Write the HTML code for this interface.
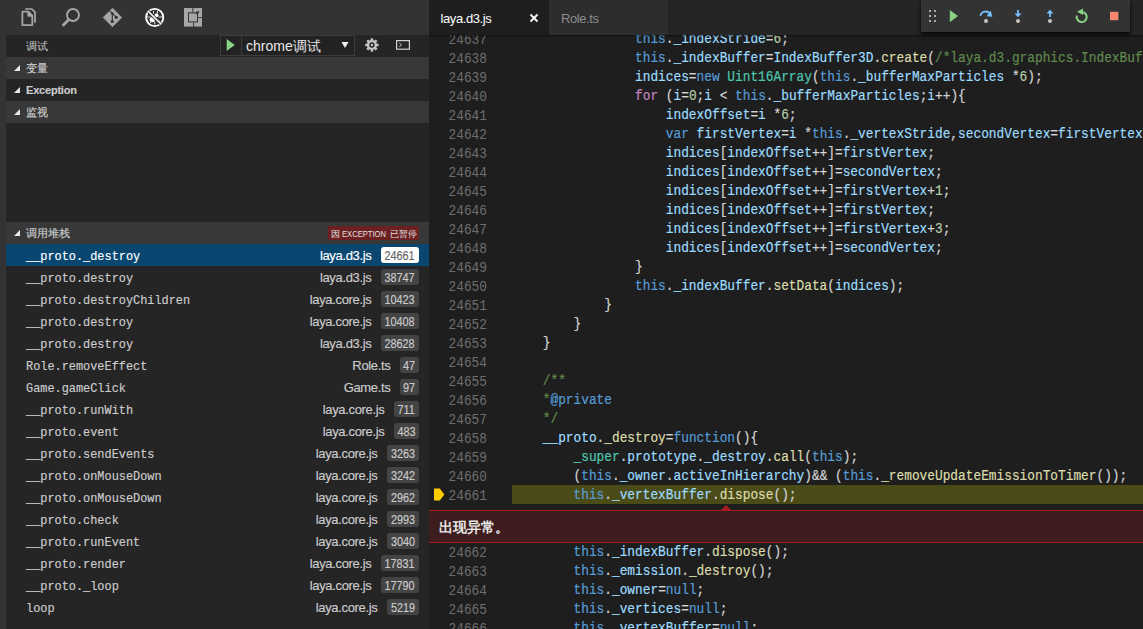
<!DOCTYPE html>
<html><head><meta charset="utf-8">
<style>
*{margin:0;padding:0;box-sizing:border-box}
html,body{width:1143px;height:629px;overflow:hidden;background:#1e1e1e;font-family:"Liberation Sans",sans-serif}
.abs{position:absolute}
#side{position:absolute;left:0;top:0;width:429px;height:629px;background:#252526;overflow:hidden}
#strip{position:absolute;left:0;top:0;width:6px;height:629px;background:#333333}
#topbar{position:absolute;left:0;top:0;width:429px;height:35px;background:#333333}
.hdr{position:absolute;left:6px;width:423px;height:22px;background:#383838;color:#cccccc;font-size:11px;line-height:22px}
.hdr .t{position:absolute;left:20px;top:0;-webkit-text-stroke:0.15px}
.tri{position:absolute;left:8px;top:7.5px;width:0;height:0;border-left:6px solid transparent;border-bottom:6px solid #e8e8e8}
.badge{position:absolute;white-space:nowrap;overflow:hidden;left:322px;top:4px;width:91px;height:14px;line-height:14px;background:#6c2022;border-radius:2px;font-size:9px;color:#e0e0e0}
.badge span{position:absolute;top:0}
.row{position:absolute;left:6px;width:423px;height:22px;line-height:22px;color:#cccccc;-webkit-text-stroke:0.15px}
.row .fn{position:absolute;left:20px;top:1.5px;font-family:"Liberation Mono",monospace;font-size:11.9px}
.row .file{position:absolute;top:1px;font-size:13px;letter-spacing:-0.33px}
.row .num{position:absolute;top:3px;height:16px;line-height:18px;background:#444444;border-radius:3px;font-size:11.5px;text-align:center;color:#cccccc}
.sel{background:#094771;color:#ffffff}
.row .num span{display:inline-block;font-size:12.6px;transform:scaleX(0.86)}
.sel .num{background:#ffffff;color:#666666}
#editor{position:absolute;left:429px;top:0;width:714px;height:629px;background:#1e1e1e;overflow:hidden}
#tabs{position:absolute;left:0;top:0;width:714px;height:35px;background:#252526}
.tab{position:absolute;top:0;height:35px;line-height:35px;font-size:13px}
.ln{position:absolute;left:0;width:58px;padding-top:1.5px;text-align:right;color:#6e6e6e;font-family:"Liberation Mono",monospace;font-size:14px;transform-origin:100% 0;transform:scaleX(0.9153);height:19px;line-height:19px}
.cl{position:absolute;left:83px;padding-top:1px;-webkit-text-stroke:0.2px;transform-origin:0 0;transform:scaleX(0.9153);white-space:pre;font-family:"Liberation Mono",monospace;font-size:14px;height:19px;line-height:19px;color:#d4d4d4}
.k{color:#569cd6}.v{color:#9cdcfe}.f{color:#dcdcaa}.n{color:#b5cea8}.c{color:#608b4e}.ty{color:#4ec9b0}.p{color:#c586c0}

</style></head><body>
<div id="side"><div id="topbar">
<svg class="abs" style="left:0;top:0" width="429" height="35" viewBox="0 0 429 35">
 <!-- files -->
 <path d="M25.2 9 H31.8 L35 12.2 V22.7" fill="none" stroke="#a6a6a6" stroke-width="1.7"/>
 <path d="M22.4 11.7 H28.4 L32.3 15.6 V25.1 H22.4 Z" fill="none" stroke="#a6a6a6" stroke-width="1.8" stroke-linejoin="round"/>
 <path d="M27.6 11 V16.4 H33" fill="#a6a6a6"/>
 <path d="M27.6 11 L33 16.4 H27.6Z" fill="#a6a6a6"/>
 <!-- search -->
 <circle cx="73" cy="15" r="6" fill="none" stroke="#a6a6a6" stroke-width="1.9"/>
 <path d="M68.9 19.4 L62.6 25.7" stroke="#a6a6a6" stroke-width="2.8"/>
 <!-- git -->
 <path d="M112.5 8.2 L121.7 17.5 L112.5 26.7 L103.2 17.5Z" fill="#a6a6a6" stroke="#a6a6a6" stroke-width="0.8" stroke-linejoin="round"/>
 <path d="M109.3 10.6 L112.3 13.3 L112.3 21.5 M112.3 13.3 L116.3 17.3" stroke="#333" stroke-width="1.1" fill="none"/>
 <circle cx="112.3" cy="13.5" r="1.3" fill="#333"/>
 <circle cx="112.3" cy="21.5" r="1.6" fill="#333"/>
 <circle cx="116.3" cy="17.3" r="1.6" fill="#333"/>
 <!-- debug -->
 <circle cx="154.7" cy="17.5" r="8.6" fill="none" stroke="#ffffff" stroke-width="1.9"/>
 <circle cx="152.3" cy="19.6" r="2.7" fill="#ffffff"/>
 <circle cx="156.5" cy="15.3" r="2" fill="#ffffff"/>
 <path d="M147.2 17 H150.5 M158.5 17 H162 M153.5 11 V13.5 M157.5 10.8 V13 M154.8 21.5 V24.5 M150 23 L151.5 21.5 M159 20 L160.5 21.5" stroke="#e8e8e8" stroke-width="1"/>
 <path d="M148.4 11.5 L160.8 23.8" stroke="#333" stroke-width="3.2"/>
 <path d="M148.2 11.2 L161 24" stroke="#ffffff" stroke-width="1.6"/>
 <!-- extensions -->
 <rect x="184" y="8" width="18" height="18.6" fill="#a6a6a6"/>
 <rect x="188" y="12.3" width="10" height="10.1" fill="#333"/>
 <rect x="189" y="13.4" width="8" height="8" fill="#a6a6a6"/>
 <rect x="192.4" y="7" width="0.9" height="5.5" fill="#333"/>
 <rect x="193.2" y="22.3" width="0.9" height="5" fill="#333"/>
 <rect x="198" y="17.2" width="5" height="0.9" fill="#333"/>
 <path d="M196 12.3 L198 10.8 L199.2 12 L197.8 14.2 H196Z" fill="#333"/>
</svg>
</div>
<div id="strip"></div>
<div class="abs" style="left:6px;top:35px;width:423px;height:22px;background:#252526"></div>
<div class="abs cjk" style="left:26px;top:35px;height:22px;line-height:22px;font-size:11px;color:#cccccc">调试</div>
<div class="abs" style="left:220px;top:35px;width:135px;height:21px;border:1px solid #3c3c3c;background:#222222"></div>
<div class="abs" style="left:241px;top:35px;width:1px;height:21px;background:#3c3c3c"></div>
<svg class="abs" style="left:226px;top:39px" width="10" height="13"><path d="M0.7 0 L8.8 6 L0.7 12Z" fill="#89d185"/></svg>
<div class="abs" style="left:246px;top:36px;height:21px;line-height:21px;font-size:14px;color:#e8e8e8">chrome调试</div>
<svg class="abs" style="left:341px;top:41px" width="8" height="8"><path d="M0.5 1 L7.5 1 L4 7Z" fill="#f0f0f0"/></svg>
<svg class="abs" style="left:363px;top:36px" width="18" height="18" viewBox="0 0 18 18">
 <g transform="translate(8.9 9) scale(0.9)" fill="#c5c5c5">
  <circle r="5.6"/>
  <g id="teeth"><rect x="-1.4" y="-7.4" width="2.8" height="3"/><rect x="-1.4" y="4.4" width="2.8" height="3"/><rect x="-7.4" y="-1.4" width="3" height="2.8"/><rect x="4.4" y="-1.4" width="3" height="2.8"/></g>
  <g transform="rotate(45)"><rect x="-1.4" y="-7.4" width="2.8" height="3"/><rect x="-1.4" y="4.4" width="2.8" height="3"/><rect x="-7.4" y="-1.4" width="3" height="2.8"/><rect x="4.4" y="-1.4" width="3" height="2.8"/></g>
  <circle r="3" fill="#252526"/>
  <circle r="1.4" fill="#c5c5c5"/>
 </g>
</svg>
<svg class="abs" style="left:395px;top:39px" width="17" height="13"><rect x="1.6" y="1.6" width="12.8" height="8.6" fill="none" stroke="#d0d0d0" stroke-width="1.2"/><path d="M4.3 3.6 L6.3 5.8 L4.3 8" fill="none" stroke="#c5c5c5" stroke-width="1"/></svg>

<div class="hdr" style="top:57px;background:#383838"><div class="tri"></div><div class="t" style="">变量</div></div>
<div class="hdr" style="top:79px;background:#252526"><div class="tri"></div><div class="t" style="font-weight:bold;letter-spacing:-0.2px;">Exception</div></div>
<div class="hdr" style="top:101px;background:#383838"><div class="tri"></div><div class="t" style="">监视</div></div>
<div class="hdr" style="top:222px;background:#383838"><div class="tri"></div><div class="t" style="">调用堆栈</div><div class="badge"><span style="left:3px;top:1px;font-size:9px">因</span><span style="left:14px;top:0.5px;font-size:9.5px;transform-origin:0 50%;transform:scaleX(0.8)">EXCEPTION</span><span style="left:62px;top:0.5px">已暂停</span></div></div>
<div class="row sel" style="top:244px"><div class="fn">__proto._destroy</div><div class="file" style="right:57.5px">laya.d3.js</div><div class="num" style="left:375px;width:38px"><span>24661</span></div></div>
<div class="row" style="top:266px"><div class="fn">__proto.destroy</div><div class="file" style="right:57.5px">laya.d3.js</div><div class="num" style="left:375px;width:38px"><span>38747</span></div></div>
<div class="row" style="top:288px"><div class="fn">__proto.destroyChildren</div><div class="file" style="right:57.5px">laya.core.js</div><div class="num" style="left:375px;width:38px"><span>10423</span></div></div>
<div class="row" style="top:310px"><div class="fn">__proto.destroy</div><div class="file" style="right:57.5px">laya.core.js</div><div class="num" style="left:375px;width:38px"><span>10408</span></div></div>
<div class="row" style="top:332px"><div class="fn">__proto.destroy</div><div class="file" style="right:57.5px">laya.d3.js</div><div class="num" style="left:375px;width:38px"><span>28628</span></div></div>
<div class="row" style="top:354px"><div class="fn">Role.removeEffect</div><div class="file" style="right:38.5px">Role.ts</div><div class="num" style="left:394px;width:19px"><span>47</span></div></div>
<div class="row" style="top:376px"><div class="fn">Game.gameClick</div><div class="file" style="right:38.5px">Game.ts</div><div class="num" style="left:394px;width:19px"><span>97</span></div></div>
<div class="row" style="top:398px"><div class="fn">__proto.runWith</div><div class="file" style="right:44.5px">laya.core.js</div><div class="num" style="left:388px;width:25px"><span>711</span></div></div>
<div class="row" style="top:420px"><div class="fn">__proto.event</div><div class="file" style="right:44.5px">laya.core.js</div><div class="num" style="left:388px;width:25px"><span>483</span></div></div>
<div class="row" style="top:442px"><div class="fn">__proto.sendEvents</div><div class="file" style="right:51.5px">laya.core.js</div><div class="num" style="left:381px;width:32px"><span>3263</span></div></div>
<div class="row" style="top:464px"><div class="fn">__proto.onMouseDown</div><div class="file" style="right:51.5px">laya.core.js</div><div class="num" style="left:381px;width:32px"><span>3242</span></div></div>
<div class="row" style="top:486px"><div class="fn">__proto.onMouseDown</div><div class="file" style="right:51.5px">laya.core.js</div><div class="num" style="left:381px;width:32px"><span>2962</span></div></div>
<div class="row" style="top:508px"><div class="fn">__proto.check</div><div class="file" style="right:51.5px">laya.core.js</div><div class="num" style="left:381px;width:32px"><span>2993</span></div></div>
<div class="row" style="top:530px"><div class="fn">__proto.runEvent</div><div class="file" style="right:51.5px">laya.core.js</div><div class="num" style="left:381px;width:32px"><span>3040</span></div></div>
<div class="row" style="top:552px"><div class="fn">__proto.render</div><div class="file" style="right:57.5px">laya.core.js</div><div class="num" style="left:375px;width:38px"><span>17831</span></div></div>
<div class="row" style="top:574px"><div class="fn">__proto._loop</div><div class="file" style="right:57.5px">laya.core.js</div><div class="num" style="left:375px;width:38px"><span>17790</span></div></div>
<div class="row" style="top:596px"><div class="fn">loop</div><div class="file" style="right:51.5px">laya.core.js</div><div class="num" style="left:381px;width:32px"><span>5219</span></div></div></div>
<div id="editor"><div id="code" class="abs" style="left:0;top:0;width:714px;height:629px"><div class="abs" style="left:83px;top:485px;width:700px;height:19px;background:#4b4b18"></div>
<div class="ln" style="top:29px">24637</div><div class="cl" style="top:29px">                <span class="k">this</span>.<span class="v">_indexStride</span>=<span class="n">6</span>;</div>
<div class="ln" style="top:48px">24638</div><div class="cl" style="top:48px">                <span class="k">this</span>.<span class="v">_indexBuffer</span>=<span class="v">IndexBuffer3D</span>.<span class="f">create</span>(<span class="c">/*laya.d3.graphics.IndexBuffer3D*/</span></div>
<div class="ln" style="top:67px">24639</div><div class="cl" style="top:67px">                <span class="v">indices</span>=<span class="k">new</span> <span class="ty">Uint16Array</span>(<span class="k">this</span>.<span class="v">_bufferMaxParticles</span> *<span class="n">6</span>);</div>
<div class="ln" style="top:86px">24640</div><div class="cl" style="top:86px">                <span class="p">for</span> (<span class="v">i</span>=<span class="n">0</span>;<span class="v">i</span> &lt; <span class="k">this</span>.<span class="v">_bufferMaxParticles</span>;<span class="v">i</span>++){</div>
<div class="ln" style="top:105px">24641</div><div class="cl" style="top:105px">                    <span class="v">indexOffset</span>=<span class="v">i</span> *<span class="n">6</span>;</div>
<div class="ln" style="top:124px">24642</div><div class="cl" style="top:124px">                    <span class="k">var</span> <span class="v">firstVertex</span>=<span class="v">i</span> *<span class="k">this</span>.<span class="v">_vertexStride</span>,<span class="v">secondVertex</span>=<span class="v">firstVertex</span>+<span class="n">1</span>;</div>
<div class="ln" style="top:143px">24643</div><div class="cl" style="top:143px">                    <span class="v">indices</span>[<span class="v">indexOffset</span>++]=<span class="v">firstVertex</span>;</div>
<div class="ln" style="top:162px">24644</div><div class="cl" style="top:162px">                    <span class="v">indices</span>[<span class="v">indexOffset</span>++]=<span class="v">secondVertex</span>;</div>
<div class="ln" style="top:181px">24645</div><div class="cl" style="top:181px">                    <span class="v">indices</span>[<span class="v">indexOffset</span>++]=<span class="v">firstVertex</span>+<span class="n">1</span>;</div>
<div class="ln" style="top:200px">24646</div><div class="cl" style="top:200px">                    <span class="v">indices</span>[<span class="v">indexOffset</span>++]=<span class="v">firstVertex</span>;</div>
<div class="ln" style="top:219px">24647</div><div class="cl" style="top:219px">                    <span class="v">indices</span>[<span class="v">indexOffset</span>++]=<span class="v">firstVertex</span>+<span class="n">3</span>;</div>
<div class="ln" style="top:238px">24648</div><div class="cl" style="top:238px">                    <span class="v">indices</span>[<span class="v">indexOffset</span>++]=<span class="v">secondVertex</span>;</div>
<div class="ln" style="top:257px">24649</div><div class="cl" style="top:257px">                }</div>
<div class="ln" style="top:276px">24650</div><div class="cl" style="top:276px">                <span class="k">this</span>.<span class="v">_indexBuffer</span>.<span class="f">setData</span>(<span class="v">indices</span>);</div>
<div class="ln" style="top:295px">24651</div><div class="cl" style="top:295px">            }</div>
<div class="ln" style="top:314px">24652</div><div class="cl" style="top:314px">        }</div>
<div class="ln" style="top:333px">24653</div><div class="cl" style="top:333px">    }</div>
<div class="ln" style="top:352px">24654</div><div class="cl" style="top:352px"></div>
<div class="ln" style="top:371px">24655</div><div class="cl" style="top:371px">    <span class="c">/**</span></div>
<div class="ln" style="top:390px">24656</div><div class="cl" style="top:390px">    <span class="c">*</span><span class="k">@private</span></div>
<div class="ln" style="top:409px">24657</div><div class="cl" style="top:409px">    <span class="c">*/</span></div>
<div class="ln" style="top:428px">24658</div><div class="cl" style="top:428px">    <span class="v">__proto</span>.<span class="f">_destroy</span>=<span class="k">function</span>(){</div>
<div class="ln" style="top:447px">24659</div><div class="cl" style="top:447px">        <span class="ty">_super</span>.<span class="v">prototype</span>.<span class="v">_destroy</span>.<span class="f">call</span>(<span class="k">this</span>);</div>
<div class="ln" style="top:466px">24660</div><div class="cl" style="top:466px">        (<span class="k">this</span>.<span class="v">_owner</span>.<span class="v">activeInHierarchy</span>)&amp;&amp; (<span class="k">this</span>.<span class="f">_removeUpdateEmissionToTimer</span>());</div>
<div class="ln" style="top:485px">24661</div><div class="cl" style="top:485px">        <span class="k">this</span>.<span class="v">_vertexBuffer</span>.<span class="f">dispose</span>();</div>
<div class="ln" style="top:542px">24662</div><div class="cl" style="top:542px">        <span class="k">this</span>.<span class="v">_indexBuffer</span>.<span class="f">dispose</span>();</div>
<div class="ln" style="top:561px">24663</div><div class="cl" style="top:561px">        <span class="k">this</span>.<span class="v">_emission</span>.<span class="f">_destroy</span>();</div>
<div class="ln" style="top:580px">24664</div><div class="cl" style="top:580px">        <span class="k">this</span>.<span class="v">_owner</span>=<span class="k">null</span>;</div>
<div class="ln" style="top:599px">24665</div><div class="cl" style="top:599px">        <span class="k">this</span>.<span class="v">_vertices</span>=<span class="k">null</span>;</div>
<div class="ln" style="top:618px">24666</div><div class="cl" style="top:618px">        <span class="k">this</span>.<span class="v">_vertexBuffer</span>=<span class="k">null</span>;</div>
<svg class="abs" style="left:5px;top:488px" width="12" height="13"><path d="M0 0.5 H5.8 L10.3 6.5 L5.8 12.5 H0Z" fill="#ffcc00"/></svg>
<div class="abs" style="left:0;top:510px;width:714px;height:33px;background:#3d1d1d;border-top:1px solid #a61d1d;border-bottom:1px solid #a61d1d"></div>
<svg class="abs" style="left:291px;top:505px" width="14" height="7"><path d="M0 6 L6 0 L12 6Z" fill="#a61d1d"/></svg>
<div class="abs" style="left:10px;top:510px;height:32px;line-height:35px;font-size:13.5px;letter-spacing:0px;font-weight:bold;color:#e8e8e8">出现异常。</div>
<div class="abs" style="left:0;top:35px;width:714px;height:2px;background:linear-gradient(rgba(0,0,0,0.55),rgba(0,0,0,0))"></div></div>
<div id="tabs">
<div class="tab" style="left:0;width:120px;background:#1e1e1e"><span style="position:absolute;left:11.5px;top:1px;color:#ffffff;letter-spacing:-0.4px">laya.d3.js</span>
<svg class="abs" style="left:100px;top:13px" width="10" height="10"><path d="M1.5 1.5 L8.5 8.5 M8.5 1.5 L1.5 8.5" stroke="#ffffff" stroke-width="1.8"/></svg></div>
<div class="tab" style="left:120px;width:119px;background:#2d2d2d"><span style="position:absolute;left:12px;top:1px;color:#8c8c8c;letter-spacing:-0.4px">Role.ts</span></div>
</div>
<div class="abs" style="left:492px;top:0;width:209px;height:32px;background:#333333;box-shadow:0 2px 4px #000"></div>
<svg class="abs" style="left:492px;top:0" width="209" height="31">
 <g fill="#aaaaaa"><rect x="8" y="10" width="2" height="2"/><rect x="13" y="10" width="2" height="2"/><rect x="8" y="15" width="2" height="2"/><rect x="13" y="15" width="2" height="2"/><rect x="8" y="20" width="2" height="2"/><rect x="13" y="20" width="2" height="2"/></g>
 <path d="M28.8 10 L37 16.1 L28.8 22.2Z" fill="#89d185"/>
 <path d="M59.3 15.8 C60 12.5 63.5 10.2 67.5 12.2 L69 13.6" fill="none" stroke="#75beff" stroke-width="1.9"/>
 <path d="M69.6 10.6 L71.4 16.8 L65.6 16.2Z" fill="#75beff"/>
 <circle cx="65" cy="21" r="2" fill="#c5c5c5"/>
 <path d="M97 10 v6" stroke="#75beff" stroke-width="1.8"/><path d="M93.5 13.5 L97 17.2 L100.5 13.5Z" fill="#75beff"/>
 <circle cx="97" cy="21" r="2" fill="#c5c5c5"/>
 <path d="M129 17 v-6" stroke="#75beff" stroke-width="1.8"/><path d="M125.5 13.5 L129 9.8 L132.5 13.5Z" fill="#75beff"/>
 <circle cx="129" cy="21" r="2" fill="#c5c5c5"/>
 <path d="M160.5 12 A5 5 0 1 1 155.9 15.6" fill="none" stroke="#89d185" stroke-width="2"/>
 <path d="M156 11.8 L162 8.6 L162 15Z" fill="#89d185"/>
 <rect x="189" y="11.8" width="8.3" height="8.4" fill="#f48771"/>
</svg></div>
</body></html>
